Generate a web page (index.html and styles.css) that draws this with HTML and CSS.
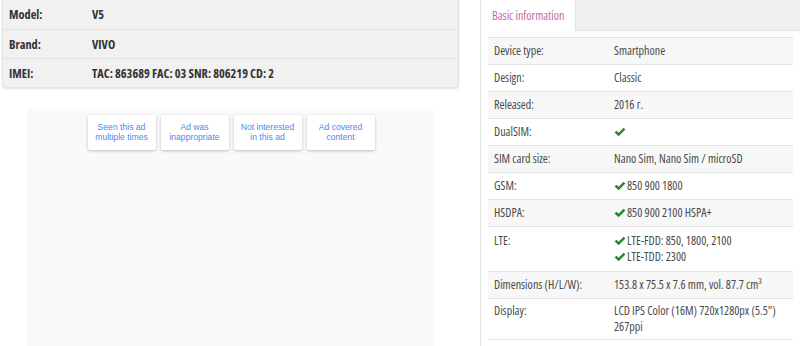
FILE: index.html
```html
<!DOCTYPE html>
<html>
<head>
<meta charset="utf-8">
<link rel="stylesheet" href="styles.css">
</head>
<body>
<div class="page">
  <div class="left">
    <div class="summary">
      <div class="srow"><span class="slabel">Model:</span><span class="svalue">V5</span></div>
      <div class="srow"><span class="slabel">Brand:</span><span class="svalue">VIVO</span></div>
      <div class="srow"><span class="slabel">IMEI:</span><span class="svalue">TAC: 863689 FAC: 03 SNR: 806219 CD: 2</span></div>
    </div>
    <div class="ad">
      <div class="ad-buttons">
        <div class="ad-btn">Seen this ad<br>multiple times</div>
        <div class="ad-btn">Ad was<br>inappropriate</div>
        <div class="ad-btn">Not interested<br>in this ad</div>
        <div class="ad-btn">Ad covered<br>content</div>
      </div>
    </div>
  </div>
  <div class="right">
    <div class="tabs">
      <div class="tab active">Basic information</div>
    </div>
    <div class="specs">
      <div class="row"><div class="label">Device type:</div><div class="value">Smartphone</div></div>
      <div class="row"><div class="label">Design:</div><div class="value">Classic</div></div>
      <div class="row"><div class="label">Released:</div><div class="value">2016 г.</div></div>
      <div class="row"><div class="label">DualSIM:</div><div class="value"><span class="line"><svg class="check" viewBox="0 0 12 10"><path d="M0.6 5.4 L2.4 3.7 L4.6 5.8 L9.6 0.8 L11.4 2.6 L4.6 9.3 Z" fill="#2b8531"/></svg></span></div></div>
      <div class="row"><div class="label">SIM card size:</div><div class="value">Nano Sim, Nano Sim / microSD</div></div>
      <div class="row"><div class="label">GSM:</div><div class="value"><span class="line"><svg class="check" viewBox="0 0 12 10"><path d="M0.6 5.4 L2.4 3.7 L4.6 5.8 L9.6 0.8 L11.4 2.6 L4.6 9.3 Z" fill="#2b8531"/></svg>850 900 1800</span></div></div>
      <div class="row"><div class="label">HSDPA:</div><div class="value"><span class="line"><svg class="check" viewBox="0 0 12 10"><path d="M0.6 5.4 L2.4 3.7 L4.6 5.8 L9.6 0.8 L11.4 2.6 L4.6 9.3 Z" fill="#2b8531"/></svg>850 900 2100 HSPA+</span></div></div>
      <div class="row tall"><div class="label">LTE:</div><div class="value"><span class="line"><svg class="check" viewBox="0 0 12 10"><path d="M0.6 5.4 L2.4 3.7 L4.6 5.8 L9.6 0.8 L11.4 2.6 L4.6 9.3 Z" fill="#2b8531"/></svg>LTE-FDD: 850, 1800, 2100</span><span class="line"><svg class="check" viewBox="0 0 12 10"><path d="M0.6 5.4 L2.4 3.7 L4.6 5.8 L9.6 0.8 L11.4 2.6 L4.6 9.3 Z" fill="#2b8531"/></svg>LTE-TDD: 2300</span></div></div>
      <div class="row"><div class="label">Dimensions (H/L/W):</div><div class="value">153.8 x 75.5 x 7.6 mm, vol. 87.7 cm³</div></div>
      <div class="row double"><div class="label">Display:</div><div class="value">LCD IPS Color (16M) 720x1280px (5.5")<br>267ppi</div></div>
    </div>
  </div>
</div>
</body>
</html>
```

FILE: styles.css
```css
* { box-sizing: border-box; }
html, body { margin: 0; padding: 0; background: #fff; }
body {
  font-family: "Open Sans", "Roboto", "Liberation Sans", sans-serif;
  font-stretch: 75%;
  overflow: hidden;
  height: 346px;
}
.page {
  display: flex;
  width: 800px;
  height: 346px;
}
.left {
  width: 480px;
  flex: none;
  display: flex;
  flex-direction: column;
  padding-left: 2px;
}
.summary {
  width: 457px;
  background: #f1f1f1;
  border-radius: 0 0 4px 4px;
  box-shadow: 0 1px 2px rgba(0,0,0,0.12);
  border: 1px solid #e4e4e4;
  border-top: none;
}
.srow {
  display: flex;
  height: 29px;
  align-items: center;
  border-top: 1px solid #e2e2e2;
  font-weight: bold;
  font-size: 12.3px;
  color: #333;
  white-space: nowrap;
}
.srow:first-child { border-top: none; }
.slabel { width: 89px; padding-left: 6px; flex: none; }
.svalue { flex: 1; }
.ad {
  margin-top: 21px;
  margin-left: 25px;
  width: 406px;
  flex: 1;
  background: #f9f9f9;
  padding-top: 6px;
}
.ad-buttons {
  display: flex;
  justify-content: center;
  gap: 5px;
  padding-left: 2px;
}
.ad-btn {
  width: 68px;
  height: 35px;
  background: #fff;
  box-shadow: 0 1px 3px rgba(0,0,0,0.25);
  border-radius: 2px;
  font-family: "Liberation Sans", Arial, sans-serif;
  font-stretch: normal;
  font-size: 8.6px;
  line-height: 10px;
  color: #4f88ee;
  text-align: center;
  padding-top: 7px;
}
.right {
  flex: 1;
  border-left: 1px solid #e2e2e2;
  display: flex;
  flex-direction: column;
}
.tabs {
  height: 31px;
  background: #f0f0f0;
  border-bottom: 1px solid #e2e2e2;
  display: flex;
  flex: none;
}
.tab {
  width: 95px;
  height: 31px;
  background: #fff;
  border-right: 1px solid #e2e2e2;
  color: #c46aa5;
  font-size: 12px;
  padding-left: 11px;
  padding-top: 7px;
  white-space: nowrap;
}
.specs {
  margin: 6px 7px 0 7px;
  width: 305px;
  border-bottom: 1px solid #e3e3e3;
}
.row {
  display: flex;
  border-top: 1px solid #e3e3e3;
  padding: 5px 0 6px;
  font-size: 12px;
  line-height: 15px;
  color: #4a4a4a;
}
.row.tall { padding: 6px 0 6px; line-height: 16px; }
.row.double { padding: 4px 0 4px; line-height: 16px; }
.row:nth-child(odd) { background: #f7f7f7; }
.label { width: 126px; padding-left: 6px; flex: none; white-space: nowrap; }
.value { flex: 1; }
.line { display: flex; align-items: center; height: 15px; }
.row.tall .line { height: 16px; }
.check { width: 12px; height: 10px; margin-right: 1px; flex: none; }
```
